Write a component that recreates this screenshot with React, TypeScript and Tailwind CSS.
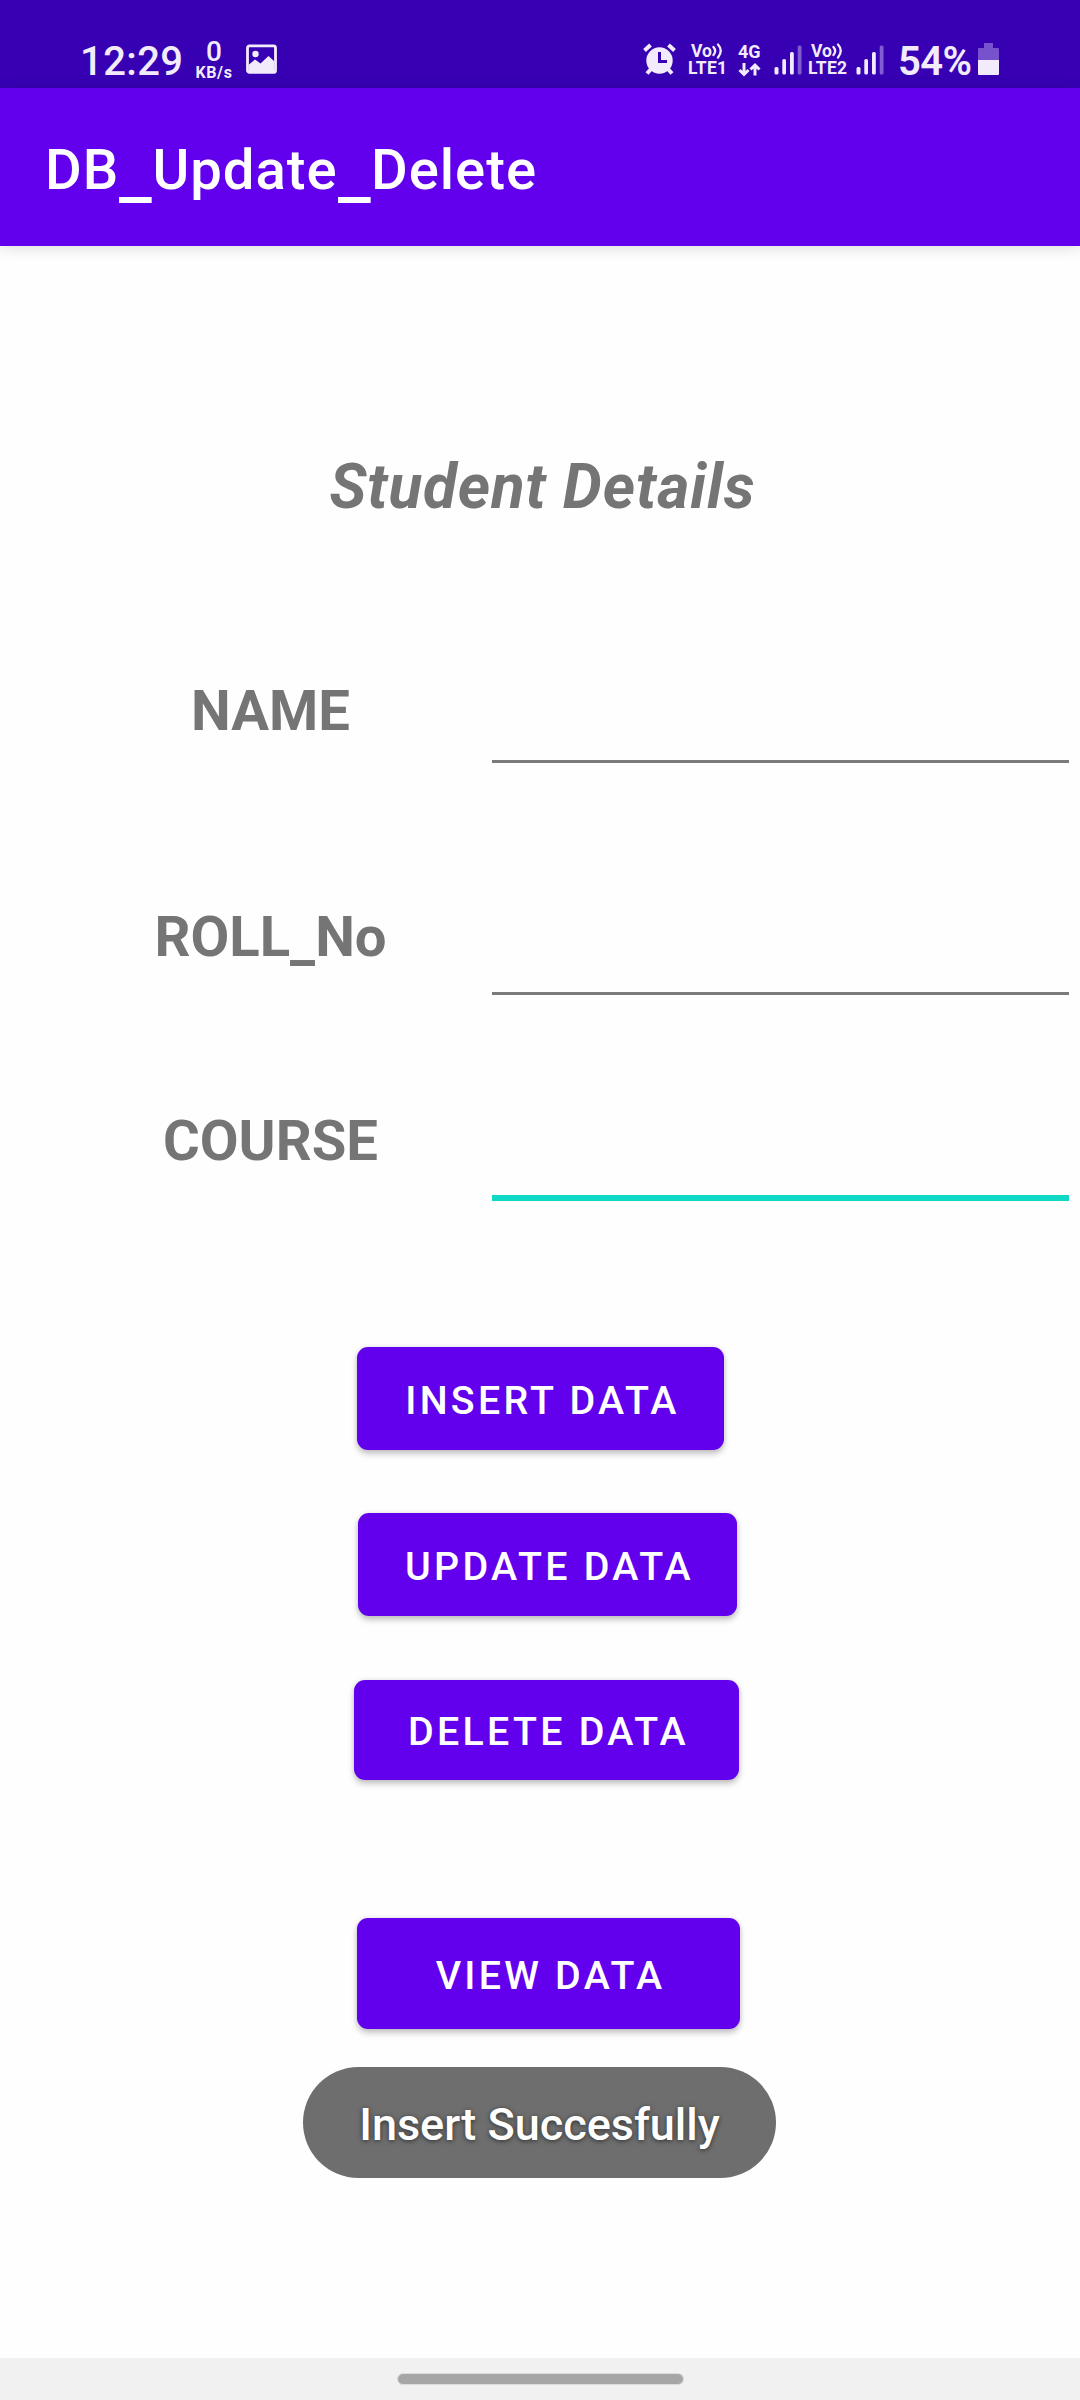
import React from "react";

function VolteBadge({ line }: { line: string }) {
  return (
    <div className="flex w-[40px] shrink-0 flex-col pt-[41px] text-[17.5px] font-bold">
      <div className="flex h-[18px] items-start pl-[3px] leading-[20px]">
        <span>Vo</span>
        <svg width="13" height="18" viewBox="0 0 13 18" fill="none" stroke="currentColor" strokeWidth="2.300" strokeLinecap="round">
          <path d="M1.500 6Q4.800 10 1.500 14M6 3.500Q11.500 9.500 6 16.500" />
        </svg>
      </div>
      <div className="h-[18px] tracking-[0.3px] leading-[19px]">{line}</div>
    </div>
  );
}

function SignalBars() {
  return (
    <svg className="mt-[45px] shrink-0" width="28" height="30" viewBox="0 0 28 30" fill="currentColor">
      <rect x="0.500" y="22" width="4" height="7.500" rx="1.500" />
      <rect x="8.300" y="14" width="3.700" height="15.500" rx="1.500" />
      <rect x="16" y="7" width="3.800" height="22.500" rx="1.500" />
      <rect x="23.700" y="0.500" width="3.800" height="29" rx="1.500" opacity="0.4" />
    </svg>
  );
}

function StatusBar() {
  return (
    <div className="flex h-[88px] items-start bg-[#3700b3] text-[#f1ebfb]">
      <div className="ml-[80px] w-[115px] pt-[38px] text-[40px] leading-[47px] font-medium tracking-[0.4px]">12:29</div>
      <div className="flex w-[38px] flex-col items-center pt-[38px]">
        <div className="h-[26px] text-[28px] leading-[28px] font-medium">0</div>
        <div className="text-[16px] leading-[17px] font-bold tracking-[0.6px]">KB/s</div>
      </div>
      <svg className="mt-[44px] ml-[13px]" width="31" height="30" viewBox="0 0 31 30">
        <rect x="1.500" y="1.900" width="28" height="26.500" rx="2" fill="none" stroke="currentColor" strokeWidth="2.800" />
        <circle cx="9.500" cy="10" r="3.200" fill="currentColor" />
        <path d="M3 20.500L9 15.500L14.500 19.500L22.500 12L28 17V27H3Z" fill="currentColor" />
      </svg>
      <svg className="mt-[43px] ml-[366px]" width="33" height="32" viewBox="0 0 33 32">
        <circle cx="16.500" cy="17.500" r="13.200" fill="currentColor" />
        <path d="M1.500 7.500L7.500 2M31.500 7.500L25.500 2" stroke="currentColor" strokeWidth="4" />
        <path d="M8 26L4 30.500M25 26L29 30.500" stroke="currentColor" strokeWidth="4" />
        <path d="M16.500 9V18.500H24" fill="none" stroke="#3700b3" strokeWidth="3" />
      </svg>
      <div className="ml-[12px] flex">
        <VolteBadge line="LTE1" />
      </div>
      <div className="ml-[10px] w-[36px] pt-[42px]">
        <div className="h-[20px] text-[18px] leading-[20px] font-bold">4G</div>
        <svg width="23" height="16" viewBox="0 0 23 16" fill="none" stroke="currentColor" strokeWidth="3">
          <path d="M6 1V13M1.500 8L6 12.500L10.500 8M17 13.500V3M12.500 7.500L17 3L21.500 7.500" />
        </svg>
      </div>
      <SignalBars />
      <div className="ml-[6px] flex">
        <VolteBadge line="LTE2" />
      </div>
      <div className="ml-[8px]">
        <SignalBars />
      </div>
      <div className="ml-[14px] w-[80px] pt-[38px] text-[40px] leading-[47px] font-semibold tracking-[-0.6px]">54%</div>
      <svg className="mt-[43px]" width="22" height="33" viewBox="0 0 22 33" fill="currentColor">
        <path d="M6 0H15V5H20Q21 5 21 6V17H0V6Q0 5 1 5H6Z" opacity="0.35" />
        <path d="M0 17H21V31Q21 32 20 32H1Q0 32 0 31Z" />
      </svg>
    </div>
  );
}

function Field({ label, row, line }: { label: React.ReactNode; row: string; line: string }) {
  return (
    <label className={`flex ${row}`}>
      <span className="w-[492px] shrink-0 pl-[49px] text-center text-[56.25px] leading-[70px] font-bold text-[#757575]">{label}</span>
      <input className={`h-full w-[577px] bg-transparent px-2 text-[50px] outline-none ${line}`} />
    </label>
  );
}

function Action({ label, box }: { label: string; box: string }) {
  return (
    <button
      className={`flex justify-center rounded-[11px] bg-[#6200ee] pl-[4px] text-[39.375px] font-medium tracking-[3.25px] whitespace-nowrap text-white shadow-[0_4px_6px_rgba(0,0,0,0.22),0_0_5px_rgba(0,0,0,0.1)] ${box}`}
    >
      {label}
    </button>
  );
}

function WideUnderscore() {
  return <span className="mr-[3px] ml-[4px] inline-block translate-y-[5px] scale-x-[1.3] scale-y-[1.15]">_</span>;
}

export default function App() {
  return (
    <div className="relative flex h-[2400px] w-[1080px] flex-col overflow-hidden bg-[#fefefe] font-['Roboto',sans-serif]">
      <StatusBar />
      <header className="h-[158px] bg-[#6200ee] pl-[45px] text-[56.25px] leading-[164px] font-medium tracking-[1px] whitespace-nowrap text-white shadow-[0_2px_14px_rgba(0,0,0,0.13)]">
        DB
        <WideUnderscore />
        Update
        <WideUnderscore />
        Delete
      </header>
      <main className="flex flex-1 flex-col">
        <h1 className="mt-[201px] pl-[5px] text-center text-[61.875px] leading-[80px] font-bold tracking-[0.9px] text-[#757575] italic">Student Details</h1>
        <Field label="NAME" row="mt-[149px] h-[87px]" line="border-b-[3px] border-[#7b7b7b]" />
        <Field
          label={
            <>
              ROLL<span className="inline-block translate-y-[4px]">_</span>No
            </>
          }
          row="mt-[139px] h-[93px]"
          line="border-b-[3px] border-[#7b7b7b]"
        />
        <Field label="COURSE" row="mt-[111px] h-[95px]" line="border-b-[6px] border-[#0fd8c6]" />
        <Action label="INSERT DATA" box="mt-[146px] ml-[357px] h-[103px] w-[367px] leading-[107px]" />
        <Action label="UPDATE DATA" box="mt-[63px] ml-[358px] h-[103px] w-[379px] leading-[107px]" />
        <Action label="DELETE DATA" box="mt-[64px] ml-[354px] h-[100px] w-[385px] leading-[103px]" />
        <Action label="VIEW DATA" box="mt-[138px] ml-[357px] h-[111px] w-[383px] leading-[115px]" />
      </main>
      <div
        role="status"
        className="absolute top-[2067px] left-[303px] h-[111px] w-[473px] rounded-full bg-[#6e6e6e] text-center text-[45px] leading-[115px] font-medium whitespace-nowrap text-white [text-shadow:0_1px_5px_rgba(0,0,0,0.6)]"
      >
        Insert Succesfully
      </div>
      <footer className="flex h-[42px] justify-center bg-[#f1f1f1] pt-[15px]">
        <div className="h-[12px] w-[287px] rounded-full border border-[#dcdcdc] bg-[#a6a6a6]" />
      </footer>
    </div>
  );
}
